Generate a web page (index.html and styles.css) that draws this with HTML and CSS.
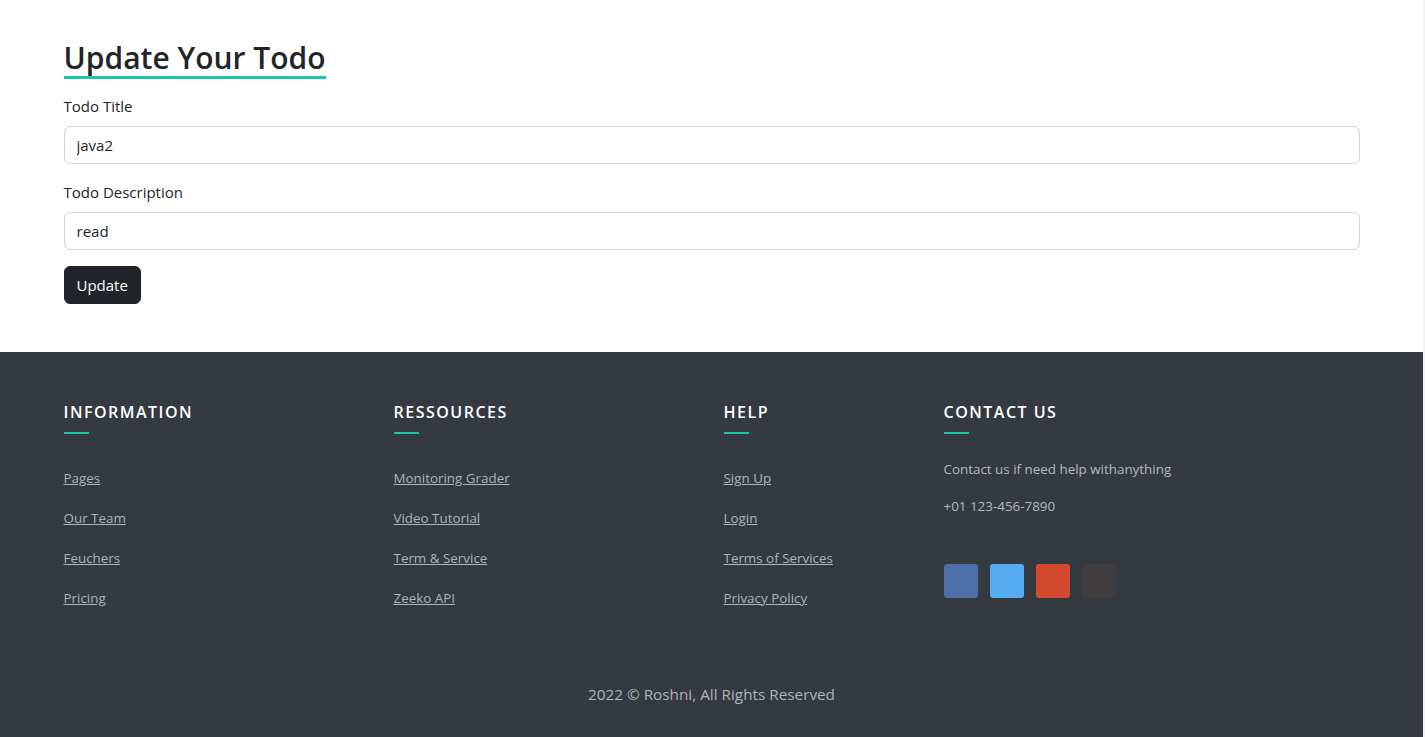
FILE: index.html
```html
<!DOCTYPE html>
<html lang="en">
<head>
<meta charset="utf-8">
<title>Update Your Todo</title>
<link rel="stylesheet" href="styles.css">
</head>
<body>
<main class="container page">
  <h2 class="page-title">Update Your Todo</h2>
  <form class="todo-form">
    <div class="field">
      <label class="field-label" for="title">Todo Title</label>
      <input class="field-input" id="title" type="text" value="java2">
    </div>
    <div class="field">
      <label class="field-label" for="desc">Todo Description</label>
      <input class="field-input" id="desc" type="text" value="read">
    </div>
    <button class="btn-dark" type="button">Update</button>
  </form>
</main>
<footer class="footer">
  <div class="container">
    <div class="footer-row">
      <div class="footer-col col-3">
        <h4 class="footer-head">Information</h4>
        <span class="footer-rule"></span>
        <ul class="footer-links">
          <li><a href="#">Pages</a></li>
          <li><a href="#">Our Team</a></li>
          <li><a href="#">Feuchers</a></li>
          <li><a href="#">Pricing</a></li>
        </ul>
      </div>
      <div class="footer-col col-3">
        <h4 class="footer-head">Ressources</h4>
        <span class="footer-rule"></span>
        <ul class="footer-links">
          <li><a href="#">Monitoring Grader</a></li>
          <li><a href="#">Video Tutorial</a></li>
          <li><a href="#">Term &amp; Service</a></li>
          <li><a href="#">Zeeko API</a></li>
        </ul>
      </div>
      <div class="footer-col col-2">
        <h4 class="footer-head">Help</h4>
        <span class="footer-rule"></span>
        <ul class="footer-links">
          <li><a href="#">Sign Up</a></li>
          <li><a href="#">Login</a></li>
          <li><a href="#">Terms of Services</a></li>
          <li><a href="#">Privacy Policy</a></li>
        </ul>
      </div>
      <div class="footer-col col-4">
        <h4 class="footer-head">Contact Us</h4>
        <span class="footer-rule"></span>
        <p class="contact-text">Contact us if need help withanything</p>
        <p class="contact-phone">+01 123-456-7890</p>
        <div class="socials">
          <a class="social social-fb" href="#" aria-label="Facebook"></a>
          <a class="social social-tw" href="#" aria-label="Twitter"></a>
          <a class="social social-gp" href="#" aria-label="Google"></a>
          <a class="social social-gh" href="#" aria-label="GitHub"></a>
        </div>
      </div>
    </div>
    <p class="copyright">2022 &copy; Roshni, All Rights Reserved</p>
  </div>
</footer>
</body>
</html>
```

FILE: styles.css
```css
* { box-sizing: border-box; }

html {
  margin: 0;
  padding: 0;
  background: #f1f1f1;
}

body {
  margin: 0 2px 0 0;
  padding: 0;
  font-family: "Open Sans", "Noto Sans", "Liberation Sans", sans-serif;
  font-size: 15px;
  line-height: 1.5;
  color: #212529;
  background: #fff;
}

.container {
  width: 1320px;
  margin: 0 auto;
  padding: 0 12px;
}

.page {
  padding-top: 40px;
  padding-bottom: 48px;
}

.page-title {
  display: inline-block;
  margin: 0 0 15px;
  font-size: 30px;
  font-weight: 600;
  line-height: 36px;
  color: #212529;
  border-bottom: 3px solid #1cc7a5;
}

.todo-form {
  display: flex;
  flex-direction: column;
  align-items: flex-start;
}

.field {
  width: 100%;
  margin-bottom: 16px;
}

.field-label {
  display: block;
  margin-bottom: 8px;
  line-height: 24px;
}

.field-input {
  display: block;
  width: 100%;
  height: 38px;
  padding: 6px 12px;
  font: inherit;
  color: #212529;
  border: 1px solid #ced4da;
  border-radius: 6px;
  background: #fff;
}

.btn-dark {
  height: 38px;
  padding: 6px 12px;
  font: inherit;
  color: #fff;
  background: #212529;
  border: 1px solid #212529;
  border-radius: 6px;
}

.footer {
  background: #343a40;
  padding: 48px 0 31px;
}

.footer-row {
  display: flex;
  margin: 0 -12px;
}

.footer-col {
  flex: none;
  padding: 0 12px;
}
.col-3 { width: 25%; }
.col-2 { width: 16.6667%; }
.col-4 { width: 33.3333%; }

.footer-head {
  margin: 0;
  font-size: 16px;
  line-height: 24px;
  font-weight: 600;
  letter-spacing: 1.5px;
  text-transform: uppercase;
  color: #fff;
}

.footer-rule {
  display: block;
  width: 25px;
  height: 2px;
  margin-top: 8px;
  background: #1cc7a5;
}

.footer-links {
  list-style: none;
  margin: 32px 0 0;
  padding: 0;
  display: flex;
  flex-direction: column;
  gap: 16px;
}

.footer-links li {
  line-height: 24px;
  font-size: 13.4px;
}

.footer-links a {
  color: #adb5bd;
  text-decoration: underline;
}

.contact-text,
.contact-phone {
  margin: 0;
  font-size: 13.4px;
  line-height: 24px;
  color: #b4b9be;
}

.contact-text { margin-top: 23px; }
.contact-phone { margin-top: 13px; }

.socials {
  display: flex;
  gap: 12px;
  margin-top: 46px;
}

.social {
  display: block;
  width: 34px;
  height: 34px;
  border-radius: 3px;
}

.social-fb { background: #4e70a8; }
.social-tw { background: #55acee; }
.social-gp { background: #d64a30; }
.social-gh { background: #3f3d3e; }

.copyright {
  margin: 72px 0 0;
  text-align: center;
  font-size: 15.3px;
  line-height: 24px;
  color: #adb5bd;
}
```
